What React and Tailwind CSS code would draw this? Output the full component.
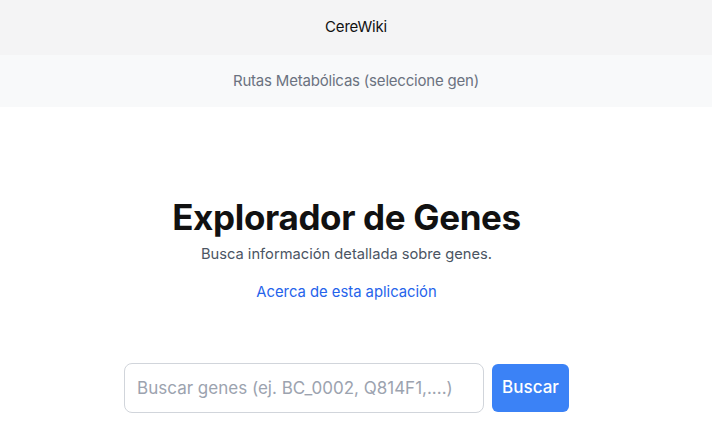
export default function App() {
  return (
    <div className="min-h-screen bg-white font-['Inter',sans-serif]">
      {/* Top bar */}
      <header className="h-[55px] bg-[#f4f4f5] flex items-center justify-center">
        <span className="text-[15px] text-[#111] tracking-[-0.2px]">CereWiki</span>
      </header>

      {/* Sub nav */}
      <nav className="h-[52px] bg-[#f8f9fa] flex items-center justify-center">
        <span className="text-[15px] text-[#6b7280] tracking-[-0.2px]">Rutas Metabólicas (seleccione gen)</span>
      </nav>

      <main className="flex flex-col items-center pr-[19px] pt-[88px]">
        <h1 className="text-[35px] leading-[44px] font-bold text-[#111111] tracking-[-0.35px]">
          Explorador de Genes
        </h1>
        <p className="mt-[4px] text-[14.7px] text-[#4b5563]">
          Busca información detallada sobre genes.
        </p>
        <a href="#" className="mt-[16px] text-[14.8px] text-[#2563eb]">
          Acerca de esta aplicación
        </a>

        <form className="mt-[60px] flex items-center gap-2" onSubmit={(e) => e.preventDefault()}>
          <input
            type="text"
            placeholder="Buscar genes (ej. BC_0002, Q814F1,....)"
            className="w-[360px] h-[50px] px-3 rounded-lg border border-[#d1d5db] text-[17px] placeholder:text-[#9ca3af] outline-none"
          />
          <button
            type="submit"
            className="h-[48px] px-[10px] rounded-md bg-[#3b82f6] text-white text-[17px] font-medium"
          >
            Buscar
          </button>
        </form>
      </main>
    </div>
  );
}
